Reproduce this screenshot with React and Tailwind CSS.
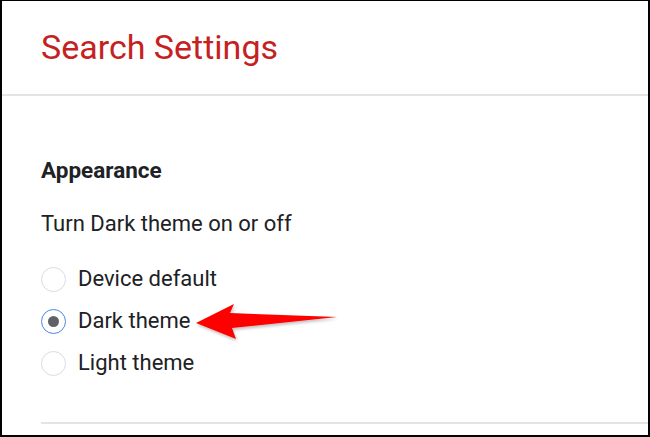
import React from 'react';

const options = [
  { label: 'Device default', checked: false },
  { label: 'Dark theme', checked: true },
  { label: 'Light theme', checked: false },
];

const Radio = ({ checked }) => (
  <span
    className={
      'flex items-center justify-center w-[25px] h-[25px] rounded-full border-[1.5px] ' +
      (checked ? 'border-[#4a86e8]' : 'border-[#dadce0]')
    }
  >
    {checked && <span className="w-[11px] h-[11px] rounded-full bg-[#5f6368]" />}
  </span>
);

const Arrow = () => (
  <svg className="absolute left-[190px] top-[300px]" width="150" height="42" viewBox="190 300 150 42">
    <defs>
      <filter id="sh" x="-10%" y="-30%" width="120%" height="160%">
        <feDropShadow dx="1" dy="2" stdDeviation="1.5" floodColor="#000" floodOpacity="0.25" />
      </filter>
    </defs>
    <path
      d="M194 322 L232 303 L228 312 L335 316 L230 327 L234 338 Z"
      fill="#ff0000"
      filter="url(#sh)"
    />
  </svg>
);

export default function App() {
  return (
    <div className="relative w-[650px] h-[437px] bg-white border-l-2 border-t border-r-2 border-b-2 border-black overflow-hidden font-['Roboto',sans-serif] text-[#202124]">
      <div className="h-[95px] flex items-center pl-[39px] border-b-2 border-[#e4e4e4]">
        <h1 className="text-[34px] leading-none text-[#c5221f] pb-[2px]">Search Settings</h1>
      </div>

      <div className="pl-[39px] pt-[62px]">
        <h2 className="text-[22.5px] leading-[24px] font-bold">Appearance</h2>
        <p className="mt-[30px] text-[22px] leading-[24px]">Turn Dark theme on or off</p>

        <div className="mt-[22px] flex flex-col">
          {options.map((o) => (
            <label key={o.label} className="h-[42px] flex items-center gap-[12px]">
              <Radio checked={o.checked} />
              <span className="text-[22px] leading-[24px]">{o.label}</span>
            </label>
          ))}
        </div>

        <div className="mt-[38px] border-t-2 border-[#e4e4e4]" />
      </div>

      <Arrow />
    </div>
  );
}
